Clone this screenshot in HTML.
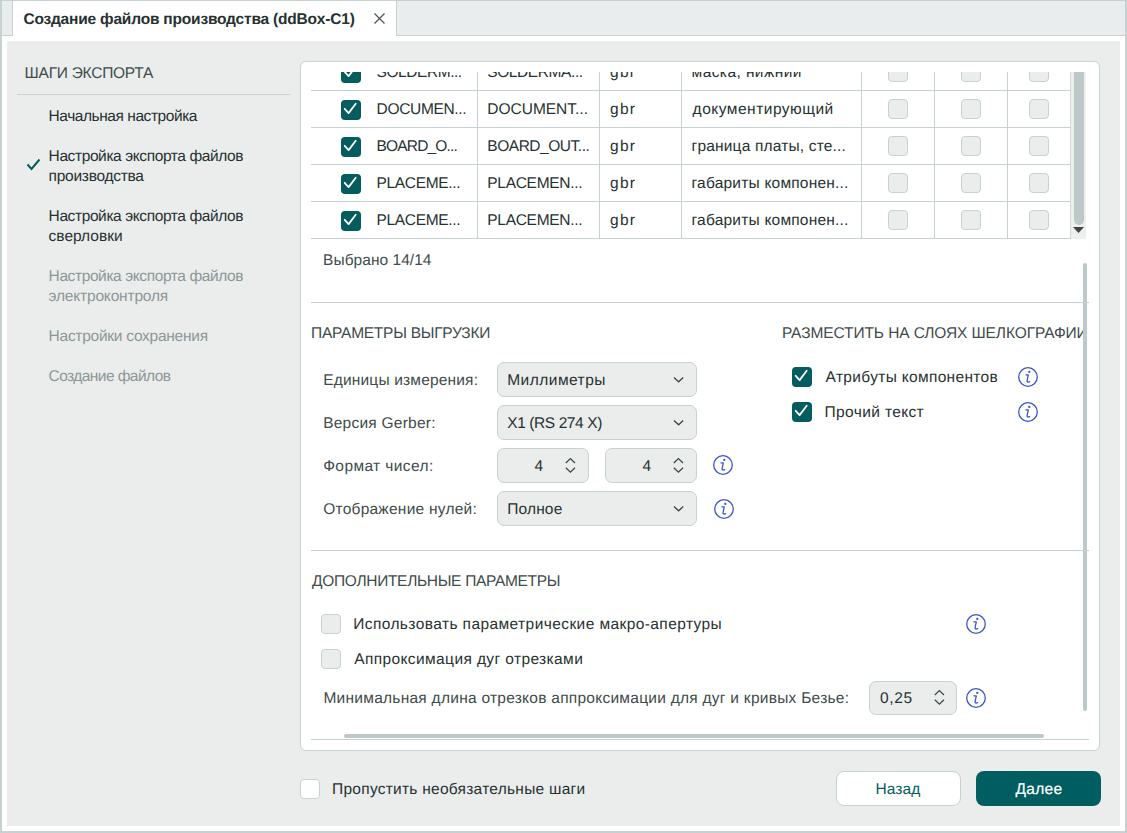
<!DOCTYPE html>
<html><head><meta charset="utf-8">
<style>
*{box-sizing:border-box;margin:0;padding:0}
html,body{width:1127px;height:833px;overflow:hidden;background:#fff}
body{position:relative;font-family:"Liberation Sans",sans-serif;text-rendering:geometricPrecision;color:#263131}
.a{position:absolute}
.t{position:absolute;font-size:15.5px;line-height:20px;white-space:nowrap}
.b{font-weight:700}
.hl{position:absolute;height:1px;background:#c5d2d1}
.vl{position:absolute;width:1px;background:#c5d2d1}
.cb{position:absolute;width:20px;height:20px;border-radius:4px}
.cb.on{background:#045c5e}
.cb.off{background:#ebeded;border:1px solid #c5d2d1}
.cb.white{background:#fff;border:1px solid #c5d2d1}
.cb svg{position:absolute;left:0;top:0}
.dd{position:absolute;height:35px;background:#ebeded;border:1px solid #c5d2d1;border-radius:7px}
.gray{color:#8c9797}
.head{color:#404b4b}
.teal{color:#045c5e}
.white{color:#fff}
.med{-webkit-text-stroke:0.2px currentColor}
</style></head><body>
<div class="a" style="left:0;top:0;width:1127px;height:833px;border-left:2px solid #c5d2d1;border-right:2px solid #c5d2d1;border-bottom:2px solid #c5d2d1;border-top:1px solid #c5d2d1"></div>
<div class="a" style="left:2px;top:1px;width:1123px;height:35px;background:#eaeded;border-bottom:1px solid #c5d2d1"></div>
<div class="a" style="left:12px;top:1px;width:385px;height:35px;background:#fff;border-left:1px solid #c5d2d1;border-right:1px solid #c5d2d1"></div>
<div class="t b" style="left:23.40px;top:10px;letter-spacing:-0.195px">Создание файлов производства (ddBox-C1)</div>
<svg class="a" style="left:374px;top:13px" width="11" height="11" viewBox="0 0 11 11"><path d="M0.5 0.5L10.5 10.5M10.5 0.5L0.5 10.5" stroke="#4a5252" stroke-width="1.2" fill="none"/></svg>
<div class="a" style="left:7px;top:41px;width:1113px;height:785px;background:#ebeded"></div>
<div class="t head" style="left:24.60px;top:64px;letter-spacing:-0.250px">ШАГИ ЭКСПОРТА</div>
<div class="hl" style="left:17px;top:94px;width:273px"></div>
<div class="t " style="left:48.60px;top:107px;letter-spacing:-0.444px">Начальная настройка</div>
<svg class="a" style="left:26px;top:158px" width="15" height="13" viewBox="0 0 15 13"><path d="M1.5 6.5L5.5 11L13.5 1.5" stroke="#045c5e" stroke-width="2" fill="none"/></svg>
<div class="t " style="left:48.60px;top:147px;letter-spacing:-0.396px">Настройка экспорта файлов</div>
<div class="t " style="left:48.60px;top:167px;letter-spacing:-0.273px">производства</div>
<div class="t " style="left:48.60px;top:207px;letter-spacing:-0.396px">Настройка экспорта файлов</div>
<div class="t " style="left:48.60px;top:227px">сверловки</div>
<div class="t gray" style="left:48.60px;top:267px;letter-spacing:-0.396px">Настройка экспорта файлов</div>
<div class="t gray" style="left:48.60px;top:287px;letter-spacing:-0.179px">электроконтроля</div>
<div class="t gray" style="left:48.60px;top:327px;letter-spacing:-0.263px">Настройки сохранения</div>
<div class="t gray" style="left:48.60px;top:367px;letter-spacing:-0.571px">Создание файлов</div>
<div class="a" style="left:300px;top:61px;width:800px;height:690px;background:#fff;border:1px solid #c5d2d1;border-radius:6px"></div>
<div class="a" style="left:311px;top:72px;width:775px;height:167px;overflow:hidden">
<div class="a" style="left:-311px;top:-72px;width:1127px;height:833px">
<div class="cb on" style="left:341px;top:63px"><svg width="20" height="20" viewBox="0 0 20 20"><path d="M3.7 8.8L7.6 13.1L14.7 3.7" stroke="#fff" stroke-width="1.8" fill="none" stroke-linecap="round" stroke-linejoin="round"/></svg></div>
<div class="t " style="left:376.60px;top:63px;letter-spacing:-0.444px">SOLDERM...</div>
<div class="t " style="left:487.30px;top:63px;letter-spacing:-0.410px">SOLDERMA...</div>
<div class="t " style="left:610.10px;top:63px;letter-spacing:1.250px">gbr</div>
<div class="t " style="left:691.60px;top:63px;letter-spacing:0.417px">маска, нижний</div>
<div class="cb off" style="left:888px;top:62px"></div>
<div class="cb off" style="left:961px;top:62px"></div>
<div class="cb off" style="left:1029px;top:62px"></div>
<div class="hl" style="left:311px;top:90px;width:759px"></div>
<div class="cb on" style="left:341px;top:100px"><svg width="20" height="20" viewBox="0 0 20 20"><path d="M3.7 8.8L7.6 13.1L14.7 3.7" stroke="#fff" stroke-width="1.8" fill="none" stroke-linecap="round" stroke-linejoin="round"/></svg></div>
<div class="t " style="left:376.60px;top:100px;letter-spacing:-0.333px">DOCUMEN...</div>
<div class="t " style="left:487.30px;top:100px;letter-spacing:-0.010px">DOCUMENT...</div>
<div class="t " style="left:610.10px;top:100px;letter-spacing:1.250px">gbr</div>
<div class="t " style="left:692.60px;top:100px;letter-spacing:0.500px">документирующий</div>
<div class="cb off" style="left:888px;top:99px"></div>
<div class="cb off" style="left:961px;top:99px"></div>
<div class="cb off" style="left:1029px;top:99px"></div>
<div class="hl" style="left:311px;top:127px;width:759px"></div>
<div class="cb on" style="left:341px;top:137px"><svg width="20" height="20" viewBox="0 0 20 20"><path d="M3.7 8.8L7.6 13.1L14.7 3.7" stroke="#fff" stroke-width="1.8" fill="none" stroke-linecap="round" stroke-linejoin="round"/></svg></div>
<div class="t " style="left:376.60px;top:137px;letter-spacing:-0.833px">BOARD_O...</div>
<div class="t " style="left:487.30px;top:137px;letter-spacing:-0.464px">BOARD_OUT...</div>
<div class="t " style="left:610.10px;top:137px;letter-spacing:1.250px">gbr</div>
<div class="t " style="left:691.60px;top:137px;letter-spacing:0.175px">граница платы, сте...</div>
<div class="cb off" style="left:888px;top:136px"></div>
<div class="cb off" style="left:961px;top:136px"></div>
<div class="cb off" style="left:1029px;top:136px"></div>
<div class="hl" style="left:311px;top:164px;width:759px"></div>
<div class="cb on" style="left:341px;top:174px"><svg width="20" height="20" viewBox="0 0 20 20"><path d="M3.7 8.8L7.6 13.1L14.7 3.7" stroke="#fff" stroke-width="1.8" fill="none" stroke-linecap="round" stroke-linejoin="round"/></svg></div>
<div class="t " style="left:376.60px;top:174px;letter-spacing:-0.344px">PLACEME...</div>
<div class="t " style="left:487.30px;top:174px;letter-spacing:-0.300px">PLACEMEN...</div>
<div class="t " style="left:610.10px;top:174px;letter-spacing:1.250px">gbr</div>
<div class="t " style="left:691.60px;top:174px;letter-spacing:0.211px">габариты компонен...</div>
<div class="cb off" style="left:888px;top:173px"></div>
<div class="cb off" style="left:961px;top:173px"></div>
<div class="cb off" style="left:1029px;top:173px"></div>
<div class="hl" style="left:311px;top:201px;width:759px"></div>
<div class="cb on" style="left:341px;top:211px"><svg width="20" height="20" viewBox="0 0 20 20"><path d="M3.7 8.8L7.6 13.1L14.7 3.7" stroke="#fff" stroke-width="1.8" fill="none" stroke-linecap="round" stroke-linejoin="round"/></svg></div>
<div class="t " style="left:376.60px;top:211px;letter-spacing:-0.344px">PLACEME...</div>
<div class="t " style="left:487.30px;top:211px;letter-spacing:-0.300px">PLACEMEN...</div>
<div class="t " style="left:610.10px;top:211px;letter-spacing:1.250px">gbr</div>
<div class="t " style="left:691.60px;top:211px;letter-spacing:0.211px">габариты компонен...</div>
<div class="cb off" style="left:888px;top:210px"></div>
<div class="cb off" style="left:961px;top:210px"></div>
<div class="cb off" style="left:1029px;top:210px"></div>
<div class="hl" style="left:311px;top:238px;width:759px"></div>
<div class="vl" style="left:477px;top:72px;height:167px"></div>
<div class="vl" style="left:599px;top:72px;height:167px"></div>
<div class="vl" style="left:681px;top:72px;height:167px"></div>
<div class="vl" style="left:861px;top:72px;height:167px"></div>
<div class="vl" style="left:934px;top:72px;height:167px"></div>
<div class="vl" style="left:1007px;top:72px;height:167px"></div>
<div class="a" style="left:1070px;top:72px;width:16px;height:167px;background:#edefef;border-left:1px solid #cdd9d8"></div>
<div class="a" style="left:1074px;top:72px;width:10px;height:153px;background:#bdc9c9;border-radius:0 0 5px 5px"></div>
<svg class="a" style="left:1073px;top:227px" width="11" height="6" viewBox="0 0 11 6"><path d="M0 0H11L5.5 6Z" fill="#3c4646"/></svg>
</div></div>
<div class="t head" style="left:323.10px;top:251px;letter-spacing:0.042px">Выбрано 14/14</div>
<div class="a" style="left:1083px;top:263px;width:4px;height:448px;background:#bdc9c9;border-radius:2px"></div>
<div class="hl" style="left:311px;top:302px;width:778px"></div>
<div class="t head" style="left:311.10px;top:324px;letter-spacing:-0.265px">ПАРАМЕТРЫ ВЫГРУЗКИ</div>
<div class="a" style="left:782px;top:318px;width:301px;height:30px;overflow:hidden"><div class="a" style="left:-782px;top:-318px;width:1127px;height:833px">
<div class="t head" style="left:781.90px;top:324px;letter-spacing:-0.097px">РАЗМЕСТИТЬ НА СЛОЯХ ШЕЛКОГРАФИИ</div>
</div></div>
<div class="t head" style="left:323.20px;top:371px;letter-spacing:0.176px">Единицы измерения:</div>
<div class="t head" style="left:323.20px;top:414px;letter-spacing:0.238px">Версия Gerber:</div>
<div class="t head" style="left:323.20px;top:457px;letter-spacing:0.392px">Формат чисел:</div>
<div class="t head" style="left:323.20px;top:500px;letter-spacing:0.241px">Отображение нулей:</div>
<div class="dd" style="left:497px;top:362px;width:200px"></div>
<div class="t " style="left:507.20px;top:371px;letter-spacing:0.478px">Миллиметры</div>
<svg class="a" style="left:673px;top:377px" width="11" height="7" viewBox="0 0 11 7"><path d="M1 0.6L5.6 4.8L10.2 0.6" stroke="#3b4545" stroke-width="1.3" fill="none"/></svg>
<div class="dd" style="left:497px;top:405px;width:200px"></div>
<div class="t " style="left:507.20px;top:414px;letter-spacing:-0.400px">X1 (RS 274 X)</div>
<svg class="a" style="left:673px;top:420px" width="11" height="7" viewBox="0 0 11 7"><path d="M1 0.6L5.6 4.8L10.2 0.6" stroke="#3b4545" stroke-width="1.3" fill="none"/></svg>
<div class="dd" style="left:497px;top:491px;width:200px"></div>
<div class="t " style="left:507.20px;top:500px;letter-spacing:0.160px">Полное</div>
<svg class="a" style="left:673px;top:506px" width="11" height="7" viewBox="0 0 11 7"><path d="M1 0.6L5.6 4.8L10.2 0.6" stroke="#3b4545" stroke-width="1.3" fill="none"/></svg>
<div class="dd" style="left:497px;top:448px;width:92px"></div>
<div class="t" style="left:497px;top:457px;width:46px;text-align:right">4</div>
<svg class="a" style="left:565px;top:457px" width="11" height="17" viewBox="0 0 11 17"><path d="M0.8 6L5.4 1.6L10 6M0.8 10.8L5.4 15.2L10 10.8" stroke="#3b4545" stroke-width="1.25" fill="none"/></svg>
<div class="dd" style="left:605px;top:448px;width:92px"></div>
<div class="t" style="left:605px;top:457px;width:46px;text-align:right">4</div>
<svg class="a" style="left:673px;top:457px" width="11" height="17" viewBox="0 0 11 17"><path d="M0.8 6L5.4 1.6L10 6M0.8 10.8L5.4 15.2L10 10.8" stroke="#3b4545" stroke-width="1.25" fill="none"/></svg>
<svg class="a" style="left:713px;top:455px" width="20" height="20" viewBox="0 0 20 20"><circle cx="10" cy="10" r="9.3" stroke="#3a56c8" stroke-width="1.3" fill="none"/><circle cx="11.3" cy="4.9" r="1.15" fill="#3a56c8"/><path d="M7.9 7.8H10.3L9.1 13.6Q8.9 15.1 10.1 15.1L11.7 14.7" stroke="#3a56c8" stroke-width="1.3" fill="none" stroke-linejoin="round" stroke-linecap="round"/></svg>
<svg class="a" style="left:714px;top:499px" width="20" height="20" viewBox="0 0 20 20"><circle cx="10" cy="10" r="9.3" stroke="#3a56c8" stroke-width="1.3" fill="none"/><circle cx="11.3" cy="4.9" r="1.15" fill="#3a56c8"/><path d="M7.9 7.8H10.3L9.1 13.6Q8.9 15.1 10.1 15.1L11.7 14.7" stroke="#3a56c8" stroke-width="1.3" fill="none" stroke-linejoin="round" stroke-linecap="round"/></svg>
<div class="cb on" style="left:792px;top:367px"><svg width="20" height="20" viewBox="0 0 20 20"><path d="M3.7 8.8L7.6 13.1L14.7 3.7" stroke="#fff" stroke-width="1.8" fill="none" stroke-linecap="round" stroke-linejoin="round"/></svg></div>
<div class="cb on" style="left:792px;top:402px"><svg width="20" height="20" viewBox="0 0 20 20"><path d="M3.7 8.8L7.6 13.1L14.7 3.7" stroke="#fff" stroke-width="1.8" fill="none" stroke-linecap="round" stroke-linejoin="round"/></svg></div>
<div class="t " style="left:825.60px;top:368px;letter-spacing:0.326px">Атрибуты компонентов</div>
<div class="t " style="left:824.60px;top:403px;letter-spacing:0.364px">Прочий текст</div>
<svg class="a" style="left:1018px;top:367px" width="20" height="20" viewBox="0 0 20 20"><circle cx="10" cy="10" r="9.3" stroke="#3a56c8" stroke-width="1.3" fill="none"/><circle cx="11.3" cy="4.9" r="1.15" fill="#3a56c8"/><path d="M7.9 7.8H10.3L9.1 13.6Q8.9 15.1 10.1 15.1L11.7 14.7" stroke="#3a56c8" stroke-width="1.3" fill="none" stroke-linejoin="round" stroke-linecap="round"/></svg>
<svg class="a" style="left:1018px;top:402px" width="20" height="20" viewBox="0 0 20 20"><circle cx="10" cy="10" r="9.3" stroke="#3a56c8" stroke-width="1.3" fill="none"/><circle cx="11.3" cy="4.9" r="1.15" fill="#3a56c8"/><path d="M7.9 7.8H10.3L9.1 13.6Q8.9 15.1 10.1 15.1L11.7 14.7" stroke="#3a56c8" stroke-width="1.3" fill="none" stroke-linejoin="round" stroke-linecap="round"/></svg>
<div class="hl" style="left:311px;top:550px;width:778px"></div>
<div class="t head" style="left:312.10px;top:572px;letter-spacing:-0.317px">ДОПОЛНИТЕЛЬНЫЕ ПАРАМЕТРЫ</div>
<div class="cb off" style="left:321px;top:614px"></div>
<div class="cb off" style="left:321px;top:649px"></div>
<div class="t " style="left:353.20px;top:615px;letter-spacing:0.412px">Использовать параметрические макро-апертуры</div>
<div class="t " style="left:354.20px;top:650px;letter-spacing:0.392px">Аппроксимация дуг отрезками</div>
<svg class="a" style="left:966px;top:614px" width="20" height="20" viewBox="0 0 20 20"><circle cx="10" cy="10" r="9.3" stroke="#3a56c8" stroke-width="1.3" fill="none"/><circle cx="11.3" cy="4.9" r="1.15" fill="#3a56c8"/><path d="M7.9 7.8H10.3L9.1 13.6Q8.9 15.1 10.1 15.1L11.7 14.7" stroke="#3a56c8" stroke-width="1.3" fill="none" stroke-linejoin="round" stroke-linecap="round"/></svg>
<div class="t head" style="left:323.40px;top:689px;letter-spacing:0.262px">Минимальная длина отрезков аппроксимации для дуг и кривых Безье:</div>
<div class="dd" style="left:869px;top:681px;width:88px;height:34px"></div>
<div class="t " style="left:880.10px;top:689px;letter-spacing:0.633px">0,25</div>
<svg class="a" style="left:934px;top:689px" width="11" height="17" viewBox="0 0 11 17"><path d="M0.8 6L5.4 1.6L10 6M0.8 10.8L5.4 15.2L10 10.8" stroke="#3b4545" stroke-width="1.25" fill="none"/></svg>
<svg class="a" style="left:966px;top:688px" width="20" height="20" viewBox="0 0 20 20"><circle cx="10" cy="10" r="9.3" stroke="#3a56c8" stroke-width="1.3" fill="none"/><circle cx="11.3" cy="4.9" r="1.15" fill="#3a56c8"/><path d="M7.9 7.8H10.3L9.1 13.6Q8.9 15.1 10.1 15.1L11.7 14.7" stroke="#3a56c8" stroke-width="1.3" fill="none" stroke-linejoin="round" stroke-linecap="round"/></svg>
<div class="a" style="left:344px;top:734px;width:700px;height:4px;background:#bdc9c9;border-radius:2px"></div>
<div class="hl" style="left:311px;top:739px;width:778px"></div>
<div class="cb white" style="left:300px;top:779px"></div>
<div class="t " style="left:332.10px;top:780px;letter-spacing:0.255px">Пропустить необязательные шаги</div>
<div class="a" style="left:836px;top:771px;width:125px;height:35px;background:#fff;border:1px solid #c5d2d1;border-radius:8px"></div>
<div class="t teal" style="left:875.60px;top:780px;letter-spacing:0.050px">Назад</div>
<div class="a" style="left:976px;top:771px;width:125px;height:35px;background:#005e60;border-radius:8px"></div>
<div class="t white med" style="left:1015.60px;top:780px;letter-spacing:0.250px">Далее</div>
</body></html>
